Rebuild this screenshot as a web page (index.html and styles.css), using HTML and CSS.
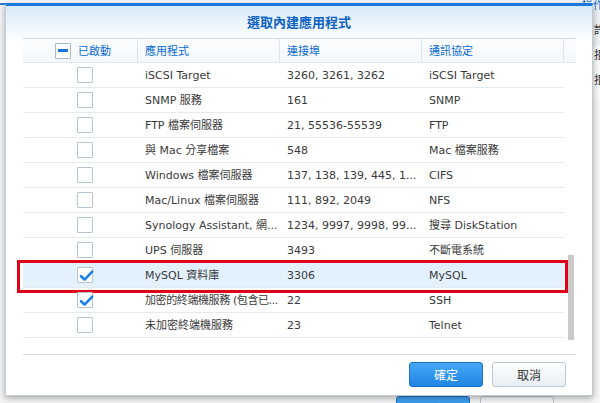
FILE: index.html
```html
<!DOCTYPE html>
<html lang="zh-Hant">
<head>
    <meta charset="UTF-8">
    <meta name="viewport" content="width=device-width, initial-scale=1.0">
    <title>選取內建應用程式</title>
    <link rel="stylesheet" href="styles.css">
</head>
<body>
    <!-- Page behind the dialog -->
    <div class="desk">
        <div class="desk-top"></div>
        <div class="desk-side">
            <span class="desk-head">操作</span>
            <span>許</span>
            <span>拒</span>
            <span>拒</span>
        </div>
        <div class="desk-buttons">
            <span class="btn btn-primary">確定</span>
            <span class="btn">取消</span>
        </div>
    </div>

    <div class="dialog">
        <div class="dialog-title">選取內建應用程式</div>

        <div class="grid">
            <div class="grid-head">
                <div class="cell cell-check"><span class="checkbox partial"></span>已啟動</div>
                <div class="cell">應用程式</div>
                <div class="cell">連接埠</div>
                <div class="cell">通訊協定</div>
                <div class="cell cell-scroll"></div>
            </div>

            <div class="grid-body">
                <div class="rows">
                    <div class="row">
                        <div class="cell cell-check"><span class="checkbox"></span></div>
                        <div class="cell">iSCSI Target</div>
                        <div class="cell">3260, 3261, 3262</div>
                        <div class="cell">iSCSI Target</div>
                    </div>
                    <div class="row">
                        <div class="cell cell-check"><span class="checkbox"></span></div>
                        <div class="cell">SNMP 服務</div>
                        <div class="cell">161</div>
                        <div class="cell">SNMP</div>
                    </div>
                    <div class="row">
                        <div class="cell cell-check"><span class="checkbox"></span></div>
                        <div class="cell">FTP 檔案伺服器</div>
                        <div class="cell">21, 55536-55539</div>
                        <div class="cell">FTP</div>
                    </div>
                    <div class="row">
                        <div class="cell cell-check"><span class="checkbox"></span></div>
                        <div class="cell">與 Mac 分享檔案</div>
                        <div class="cell">548</div>
                        <div class="cell">Mac 檔案服務</div>
                    </div>
                    <div class="row">
                        <div class="cell cell-check"><span class="checkbox"></span></div>
                        <div class="cell">Windows 檔案伺服器</div>
                        <div class="cell">137, 138, 139, 445, 1...</div>
                        <div class="cell">CIFS</div>
                    </div>
                    <div class="row">
                        <div class="cell cell-check"><span class="checkbox"></span></div>
                        <div class="cell">Mac/Linux 檔案伺服器</div>
                        <div class="cell">111, 892, 2049</div>
                        <div class="cell">NFS</div>
                    </div>
                    <div class="row">
                        <div class="cell cell-check"><span class="checkbox"></span></div>
                        <div class="cell">Synology Assistant, 網...</div>
                        <div class="cell">1234, 9997, 9998, 99...</div>
                        <div class="cell">搜尋 DiskStation</div>
                    </div>
                    <div class="row">
                        <div class="cell cell-check"><span class="checkbox"></span></div>
                        <div class="cell">UPS 伺服器</div>
                        <div class="cell">3493</div>
                        <div class="cell">不斷電系統</div>
                    </div>
                    <div class="row selected marked">
                        <div class="cell cell-check"><span class="checkbox checked"><svg viewBox="0 0 16 16"><path d="M3 8.2 L6.6 11.6 L14.2 3.6"/></svg></span></div>
                        <div class="cell">MySQL 資料庫</div>
                        <div class="cell">3306</div>
                        <div class="cell">MySQL</div>
                    </div>
                    <div class="row">
                        <div class="cell cell-check"><span class="checkbox checked"><svg viewBox="0 0 16 16"><path d="M3 8.2 L6.6 11.6 L14.2 3.6"/></svg></span></div>
                        <div class="cell tight">加密的終端機服務 (包含已...</div>
                        <div class="cell">22</div>
                        <div class="cell">SSH</div>
                    </div>
                    <div class="row">
                        <div class="cell cell-check"><span class="checkbox"></span></div>
                        <div class="cell">未加密終端機服務</div>
                        <div class="cell">23</div>
                        <div class="cell">Telnet</div>
                    </div>
                </div>
                <div class="scrollbar"><div class="thumb"></div></div>
            </div>
        </div>

        <div class="dialog-footer">
            <button class="btn btn-primary">確定</button>
            <button class="btn">取消</button>
        </div>
    </div>
</body>
</html>
```

FILE: styles.css
```css
html, body {
    margin: 0;
    padding: 0;
}

body {
    width: 600px;
    height: 403px;
    overflow: hidden;
    position: relative;
    font-family: "DejaVu Sans", "Noto Sans CJK TC", sans-serif;
    font-size: 11px;
    color: #3a3a3a;
}

/* Page behind the dialog */
.desk {
    height: 403px;
    background: #f6f7f8;
    position: relative;
    overflow: hidden;
}

.desk-top {
    height: 3px;
    background: #fbfbfb;
    border-bottom: 2px solid #2a7fd8;
}

.desk-side {
    position: absolute;
    top: 0;
    left: 582px;
    width: 18px;
    height: 100px;
    overflow: hidden;
    display: flex;
    flex-direction: column;
    gap: 11px;
    font-family: "Noto Sans CJK TC", sans-serif;
    font-size: 11px;
    line-height: 14px;
    color: #333;
    white-space: nowrap;
    background: linear-gradient(#eef3f8 0, #eef3f8 45px, #fafbfc 45px);
}

.desk-side span {
    padding-left: 12px;
}

.desk-side .desk-head {
    padding-left: 0;
    color: #1570d0;
    line-height: 9px;
    margin-bottom: 2px;
}

.desk-buttons {
    position: absolute;
    top: 396px;
    left: 396px;
    display: flex;
    gap: 10px;
}

/* Dialog */
.dialog {
    position: absolute;
    top: 3px;
    left: 5px;
    width: 586px;
    height: 389px;
    background: #fff;
    border: 1px solid #c3cad1;
    border-top: 3px solid #1b79dc;
    box-shadow: 0 2px 7px rgba(0, 0, 0, 0.35);
    display: flex;
    flex-direction: column;
}

.dialog-title {
    height: 32px;
    line-height: 31px;
    text-align: center;
    font-family: "Noto Sans CJK TC", sans-serif;
    font-size: 13px;
    font-weight: bold;
    color: #0d62c6;
    background: linear-gradient(#d8eafa, #eef6fd 60%, #fbfdff);
}

.grid {
    margin: 0 16px 0 17px;
    padding-bottom: 14px;
    border-bottom: 1px solid #d9dde2;
}

.grid-head,
.row {
    display: grid;
    grid-template-columns: 115px 142px 142px 142px;
}

.grid-head {
    grid-template-columns: 115px 142px 142px 142px 12px;
    height: 23px;
    border-top: 1px solid #cbdaea;
    border-bottom: 1px solid #e0e9f2;
    background: linear-gradient(#fcfdff, #f3f7fb);
    color: #0b6bd4;
    font-family: "Noto Sans CJK TC", sans-serif;
}

.grid-head .cell {
    border-right: 1px solid #dbe5ef;
    line-height: 23px;
}

.grid-head .cell:last-child {
    border-right: none;
}

.cell {
    min-width: 0;
    padding: 0 2px 0 7px;
    white-space: nowrap;
    overflow: hidden;
    text-overflow: clip;
    display: flex;
    align-items: center;
}

.cell.tight {
    letter-spacing: -0.4px;
}

.grid-head .cell-check {
    padding-left: 32px;
    gap: 7px;
}

.row .cell-check {
    padding-left: 54px;
}

.cell-scroll {
    padding: 0;
}

.grid-body {
    display: flex;
    height: 277px;
}

.rows {
    width: 541px;
}

.row {
    height: 24px;
    border-bottom: 1px solid #e6eaee;
    position: relative;
}

.row .cell {
    display: block;
    line-height: 24px;
    padding-top: 1px;
}

.row .cell-check {
    display: flex;
    padding-top: 0;
}

.row.selected {
    background: #e3f1fd;
}

/* Red annotation frame */
.row.marked::after {
    content: "";
    position: absolute;
    top: -3px;
    left: -6px;
    right: -4px;
    bottom: -6px;
    border: 3px solid #e0001a;
}

.checkbox {
    width: 14px;
    height: 14px;
    border: 1px solid #b7c5d4;
    border-radius: 1px;
    background: #fff;
    display: inline-flex;
    align-items: center;
    justify-content: center;
    position: relative;
    flex: none;
}

.checkbox.partial {
    border-color: #a7bacd;
}

.checkbox.partial::before {
    content: "";
    width: 10px;
    height: 3px;
    background: #1a74d8;
}

.checkbox svg {
    position: absolute;
    top: 0;
    left: 0;
    width: 16px;
    height: 16px;
    overflow: visible;
}

.checkbox svg path {
    fill: none;
    stroke: #1a82e6;
    stroke-width: 2.6;
    stroke-linecap: round;
    stroke-linejoin: round;
}

.scrollbar {
    width: 12px;
    display: flex;
    flex-direction: column;
    justify-content: flex-end;
}

.thumb {
    width: 6px;
    height: 85px;
    margin-left: 4px;
    background: #cacaca;
}

.dialog-footer {
    display: flex;
    justify-content: flex-end;
    gap: 9px;
    padding: 7px 26px 0 0;
}

.btn {
    width: 74px;
    height: 25px;
    box-sizing: border-box;
    border: 1px solid #bfc9d3;
    border-radius: 3px;
    background: linear-gradient(#fdfeff, #e9eef3);
    color: #333;
    font-family: "Noto Sans CJK TC", sans-serif;
    font-size: 12px;
    line-height: 23px;
    text-align: center;
    padding: 0;
    display: inline-block;
}

.btn-primary {
    border-color: #1a72c9;
    background: linear-gradient(#45a7f5, #1f85e5);
    color: #fff;
}
```
